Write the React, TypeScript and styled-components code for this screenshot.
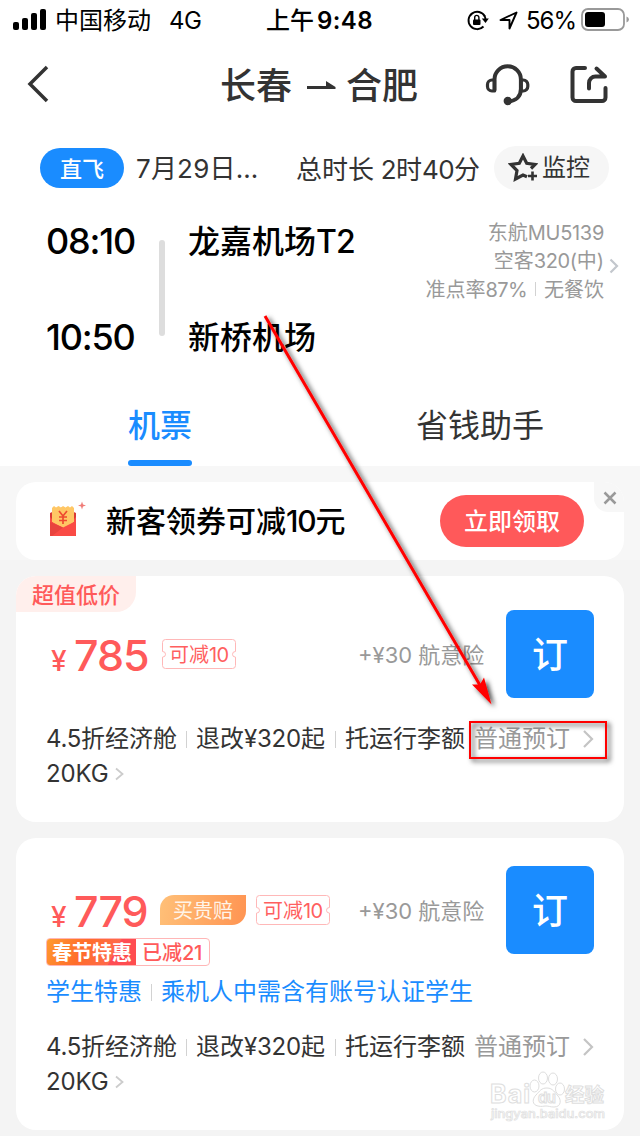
import React from 'react';
import styled, { createGlobalStyle } from 'styled-components';

const BLUE = '#1a8cff';
const RED = '#ff5a5a';
const INK = '#333';
const GREY = '#999';

const GlobalStyle = createGlobalStyle`
  * { box-sizing: border-box; }
  body {
    margin: 0;
    background: #f4f4f4;
    font-family: Inter, "Noto Sans CJK SC", sans-serif;
    overflow: hidden;
  }
`;

const Screen = styled.div`
  position: relative;
  width: 640px;
  height: 1136px;
  overflow: hidden;
  background: #f4f4f4;
`;

const Text = styled.span<{
  $size: number;
  $w?: number;
  $color?: string;
  $weight?: number;
  $track?: number;
  $drop?: number;
}>`
  display: block;
  flex: none;
  width: ${(p) => (p.$w ? `${p.$w}px` : 'auto')};
  margin-top: ${(p) => p.$drop ?? 0}px;
  margin-bottom: ${(p) => -(p.$drop ?? 0)}px;
  font-size: ${(p) => p.$size}px;
  line-height: 36px;
  font-weight: ${(p) => p.$weight ?? 400};
  color: ${(p) => p.$color ?? INK};
  letter-spacing: ${(p) => p.$track ?? 0}px;
  white-space: nowrap;
`;

const Num = styled.span<{ $track: number }>`
  letter-spacing: ${(p) => p.$track}px;
`;

const Header = styled.header`
  height: 466px;
  background: #fff;
`;

const StatusBar = styled.div`
  display: flex;
  align-items: center;
  height: 40px;
  padding-left: 13px;
`;

const SignalIcon = styled.svg`
  flex: none;
  width: 42px;
  height: 24px;
`;

const StatusIcon = styled.svg<{ $w: number; $gap: number }>`
  flex: none;
  width: ${(p) => p.$w}px;
  height: 24px;
  margin-right: ${(p) => p.$gap}px;
`;

const NavBar = styled.nav`
  display: flex;
  align-items: center;
  height: 88px;
  padding-left: 26px;
`;

const NavIcon = styled.svg<{ $w: number; $gap: number }>`
  flex: none;
  width: ${(p) => p.$w}px;
  height: 48px;
  margin-right: ${(p) => p.$gap}px;
`;

const Summary = styled.div`
  display: flex;
  align-items: center;
  height: 44px;
  margin-top: 18px;
  padding-left: 40px;
`;

const DirectPill = styled.div`
  display: flex;
  align-items: center;
  justify-content: center;
  width: 84px;
  height: 40px;
  margin-right: 12px;
  border-radius: 20px;
  background: ${BLUE};
`;

const MonitorPill = styled.div`
  display: flex;
  align-items: center;
  width: 115px;
  height: 44px;
  padding-left: 14px;
  border-radius: 22px;
  background: #f6f6f6;
  svg { flex: none; margin-right: 4px; }
`;

const Itinerary = styled.section`
  display: flex;
  height: 150px;
  margin-top: 28px;
  padding: 5px 0 0 46px;
`;

const Stops = styled.div<{ $w: number }>`
  display: flex;
  flex-direction: column;
  gap: 60px;
  width: ${(p) => p.$w}px;
`;

const Rail = styled.div`
  width: 6px;
  height: 96px;
  margin: 17px 23px 0 0;
  border-radius: 3px;
  background: #ddd;
`;

const FlightInfo = styled.div`
  display: flex;
  flex-direction: column;
  align-items: flex-end;
  width: 192px;
  margin-top: -5px;
  span { line-height: 28.5px; }
`;

const InfoLine = styled.div`
  display: flex;
  align-items: center;
`;

const Divider = styled.i<{ $h: number; $before: number; $after: number }>`
  flex: none;
  width: 1px;
  height: ${(p) => p.$h}px;
  margin: 0 ${(p) => p.$after}px 0 ${(p) => p.$before}px;
  background: #d2d2d2;
`;

const InfoChevron = styled.svg`
  width: 10px;
  height: 16px;
  margin: 35px 0 0 5px;
`;

const Tabs = styled.div`
  display: grid;
  grid-template-columns: 1fr 1fr;
  height: 98px;
`;

const Tab = styled.div<{ $active?: boolean }>`
  display: flex;
  flex-direction: column;
  align-items: center;
  justify-content: space-between;
  padding-top: 39px;
  &::after {
    content: '';
    width: 64px;
    height: 6px;
    border-radius: 3px;
    background: ${(p) => (p.$active ? BLUE : 'transparent')};
  }
`;

const BannerArea = styled.div`
  height: 94px;
  padding: 16px 16px 0;
  background: #f7f7f7;
`;

const Banner = styled.section`
  display: flex;
  align-items: flex-start;
  height: 78px;
  padding-left: 32px;
  border-radius: 20px;
  background: #fff;
  overflow: hidden;
`;

const Envelope = styled.svg`
  flex: none;
  width: 40px;
  height: 40px;
  margin: 18px 18px 0 0;
`;

const BannerTitle = styled.div`
  width: 334px;
  padding-top: 21px;
`;

const ClaimButton = styled.button`
  width: 144px;
  height: 52px;
  margin-top: 13px;
  padding: 0;
  border: 0;
  border-radius: 26px;
  background: #ff595a;
  display: flex;
  align-items: center;
  justify-content: center;
  font-family: inherit;
`;

const CloseButton = styled.div`
  display: flex;
  align-items: center;
  justify-content: center;
  width: 30px;
  height: 30px;
  margin-left: 10px;
  padding-left: 2px;
  padding-top: 2px;
  border-bottom-left-radius: 14px;
  background: #f7f7f7;
`;

const Card = styled.article<{ $h: number }>`
  height: ${(p) => p.$h}px;
  margin: 16px 16px 0;
  border-radius: 20px;
  background: #fff;
  overflow: hidden;
`;

const CornerTag = styled.div`
  display: flex;
  align-items: center;
  width: 120px;
  height: 36px;
  padding-left: 16px;
  border-bottom-right-radius: 20px;
  background: #ffefec;
`;

const PriceRow = styled.div<{ $top: number }>`
  display: flex;
  align-items: center;
  height: 88px;
  margin-top: ${(p) => p.$top}px;
  padding: 0 30px 0 35px;
`;

const Price = styled.div<{ $w: number }>`
  display: flex;
  align-items: baseline;
  flex: none;
  width: ${(p) => p.$w}px;
  padding-top: 7px;
`;

const Insurance = styled.div`
  margin-left: auto;
  width: 148px;
`;

const BookButton = styled.button`
  flex: none;
  display: flex;
  align-items: center;
  justify-content: center;
  width: 88px;
  height: 88px;
  padding: 0;
  border: 0;
  border-radius: 8px;
  background: ${BLUE};
  font-family: inherit;
`;

const TicketBox = styled.div`
  display: grid;
  width: 74px;
  height: 30px;
  > * { grid-area: 1 / 1; }
  > span { padding-left: 7px; line-height: 30px; }
`;

const Guarantee = styled.div`
  display: flex;
  width: 86px;
  height: 30px;
  margin-right: 10px;
  padding-left: 13px;
  border-radius: 14px 0 14px 0;
  background: linear-gradient(100deg, #ffc078, #ff9452);
  span { line-height: 30px; }
`;

const Promo = styled.div`
  display: flex;
  width: 164px;
  height: 28px;
  margin: -16px 0 0 30px;
  border: 1px solid #ffb6b6;
  border-radius: 4px;
  overflow: hidden;
  span { line-height: 28px; }
`;

const PromoName = styled.div`
  width: 89px;
  padding-left: 5px;
  background: linear-gradient(118deg, #ff9a2e 0%, #ff6d2b 40%, #ff6a4a 72%, #ff4d55 73%, #ff4d4d 100%);
`;

const PromoValue = styled.div`
  padding-left: 6px;
`;

const Student = styled.div`
  display: flex;
  align-items: center;
  margin-top: 8px;
  padding-left: 30px;
`;

const Details = styled.div<{ $top: number }>`
  display: flex;
  align-items: center;
  height: 36px;
  margin-top: ${(p) => p.$top}px;
  padding-left: 30px;
`;

const Baggage = styled.div`
  display: flex;
  align-items: center;
  height: 34px;
  padding-left: 30px;
`;

const Annotation = styled.svg`
  position: absolute;
  left: 0;
  top: 0;
  pointer-events: none;
`;

const Watermark = styled.svg`
  position: absolute;
  left: 486px;
  top: 1060px;
`;

function Ticket() {
  return (
    <TicketBox>
      <svg width="74" height="30" viewBox="0 0 74 30" fill="none" stroke="#ffb8b8" strokeWidth="1">
        <path d="M3.500.5h67a3 3 0 0 1 3 3v9q-3 0-3 2.800t3 2.800v8.400a3 3 0 0 1-3 3h-67a3 3 0 0 1-3-3v-8.400q3 0 3-2.800t-3-2.800v-9a3 3 0 0 1 3-3z" />
      </svg>
      <Text $size={20} $color="#ff5f5f" $drop={1}>可减<Num $track={-0.6}>10</Num></Text>
    </TicketBox>
  );
}

function FareHead({ price, top, guarantee }: { price: string; top: number; guarantee?: boolean }) {
  return (
    <PriceRow $top={top}>
      <Price $w={guarantee ? 109 : 111}>
        <Text $size={28} $w={23} $color={RED} $weight={500}>¥</Text>
        <Text $size={43} $color={RED} $weight={550} $track={-1}>{price}</Text>
      </Price>
      {guarantee && (
        <Guarantee>
          <Text $size={20} $color="#fff4e8" $drop={1}>买贵赔</Text>
        </Guarantee>
      )}
      <Ticket />
      <Insurance>
        <Text $size={22} $color={GREY} $drop={1}><Num $track={0}>+¥30 </Num>航意险</Text>
      </Insurance>
      <BookButton>
        <Text $size={36} $color="#fff" $weight={500} $drop={1}>订</Text>
      </BookButton>
    </PriceRow>
  );
}

function FareDetails({ top }: { top: number }) {
  return (
    <>
      <Details $top={top}>
        <Text $size={24} $w={131}><Num $track={-0.3}>4.5</Num>折经济舱</Text>
        <Divider $h={17} $before={9} $after={9} />
        <Text $size={24} $w={130}>退改<Num $track={-0.2}>¥320</Num>起</Text>
        <Divider $h={17} $before={9} $after={9} />
        <Text $size={24} $w={129}>托运行李额</Text>
        <Text $size={24} $w={108} $color={GREY}>普通预订</Text>
        <svg width="14" height="20" viewBox="0 0 14 20" fill="none" stroke="#c4c4c4" strokeWidth="2.200">
          <path d="M2 2l8 8-8 8" />
        </svg>
      </Details>
      <Baggage>
        <Text $size={24} $w={69} $track={-0.1}>20KG</Text>
        <svg width="10" height="14" viewBox="0 0 10 14" fill="none" stroke="#ccc" strokeWidth="1.800">
          <path d="M1 1.500l6.500 5.500L1 12.500" />
        </svg>
      </Baggage>
    </>
  );
}

export default function App() {
  return (
    <Screen>
      <GlobalStyle />
      <Header>
        <StatusBar>
          <SignalIcon viewBox="0 0 42 24">
            <rect x="0" y="14" width="6" height="8" rx="2" />
            <rect x="9" y="10" width="6" height="12" rx="2" />
            <rect x="18" y="5" width="6" height="17" rx="2" />
            <rect x="27" y="1" width="6" height="21" rx="2" />
          </SignalIcon>
          <Text $size={24} $w={114} $color="#000" $drop={1}>中国移动</Text>
          <Text $size={24} $w={97} $color="#000" $track={-0.6} $drop={1}>4G</Text>
          <Text $size={24} $w={51} $color="#000" $weight={500} $drop={1}>上午</Text>
          <Text $size={24} $w={150} $color="#000" $weight={600} $track={0.4} $drop={1}>9:48</Text>
          <StatusIcon $w={22} $gap={10} viewBox="0 0 22 24" fill="none" stroke="#000" strokeWidth="1.900">
            <path d="M17.800 8.200A8.700 8.700 0 1 0 16.500 18.500" />
            <path d="M17.300 7.500q1.200 2 1.200 4" />
            <path d="M14.800 10.500h7l-3.300 4.500z" fill="#000" stroke="none" />
            <rect x="6" y="11.500" width="7.500" height="5.500" rx="1" fill="#000" stroke="none" />
            <path d="M7.700 12V9.500a2.100 2.100 0 0 1 4.200 0V12" strokeWidth="1.400" />
          </StatusIcon>
          <StatusIcon $w={20} $gap={7} viewBox="0 0 20 24" fill="none" stroke="#000" strokeWidth="1.900" strokeLinejoin="round">
            <path d="M1.500 12L17.500 4.500 10.500 20.500V12z" />
          </StatusIcon>
          <Text $size={24} $w={55} $color="#000" $track={-1} $drop={1}>56%</Text>
          <StatusIcon $w={48} $gap={0} viewBox="0 0 48 24">
            <rect x="1" y="1" width="42" height="21" rx="6" fill="none" stroke="#999" strokeWidth="1.800" />
            <rect x="4" y="4" width="20" height="15" rx="3" />
            <path d="M45.500 8.500q2.500 1 2.500 3t-2.500 3z" fill="#999" />
          </StatusIcon>
        </StatusBar>

        <NavBar>
          <NavIcon $w={24} $gap={170} viewBox="0 0 24 48" fill="none" stroke={INK} strokeWidth="3.500">
            <path d="M21 7L4 24l17 17" />
          </NavIcon>
          <Text $size={36} $w={86} $weight={500} $drop={2}>长春</Text>
          <NavIcon $w={30} $gap={10} viewBox="0 0 30 48" fill={INK}>
            <path d="M1 26h19v-5l9.500 6v2H1z" />
          </NavIcon>
          <Text $size={36} $w={138} $weight={500} $drop={2}>合肥</Text>
          <NavIcon $w={46} $gap={39} viewBox="0 0 46 48" fill="none" stroke={INK} strokeWidth="4" strokeLinecap="round" strokeLinejoin="round">
            <path d="M10.500 30V19.500a13.200 13.200 0 0 1 26.400 0V29c0 7-4.500 12-12.900 12.500" />
            <path d="M10.500 20H8a4.500 4.500 0 0 0-4.500 4.500v2A4.500 4.500 0 0 0 8 31h2.500zM37 20h2.300a4.500 4.500 0 0 1 4.500 4.500v2a4.500 4.500 0 0 1-4.500 4.500H37z" strokeWidth="3.200" />
            <circle cx="23.800" cy="41" r="2.200" fill={INK} />
          </NavIcon>
          <NavIcon $w={40} $gap={0} viewBox="0 0 40 48" fill="none" stroke={INK} strokeWidth="4" strokeLinecap="round" strokeLinejoin="round">
            <path d="M16 8H7a3.500 3.500 0 0 0-3.500 3.500v26A3.500 3.500 0 0 0 7 41h26a3.500 3.500 0 0 0 3.500-3.500V28" />
            <path d="M20 28.500V23a6.500 6.500 0 0 1 6.500-6.500H36L27.500 8.500" />
          </NavIcon>
        </NavBar>

        <Summary>
          <DirectPill>
            <Text $size={22} $color="#fff" $weight={500} $drop={1}>直飞</Text>
          </DirectPill>
          <Text $size={26} $w={160} $track={0.2} $drop={1}>7月29日…</Text>
          <Text $size={26} $w={198} $drop={2}>总时长<Num $track={-0.6}> 2</Num>时<Num $track={-0.6}>40</Num>分</Text>
          <MonitorPill>
            <svg width="30" height="30" viewBox="0 0 30 30" fill="none" stroke={INK} strokeWidth="3.200">
              <path d="M19 23.800L15 22l-7.500 4 1.500-8.500L3 11.500l8.300-1.200L15 3l3.700 7.300L27 11.500l-4 4" />
              <path d="M24.500 18.500v9M20 23h9" strokeWidth="2.600" />
            </svg>
            <Text $size={24}>监控</Text>
          </MonitorPill>
        </Summary>

        <Itinerary>
          <Stops $w={113}>
            <Text $size={36} $color="#000" $weight={500} $track={-1.2}>08:10</Text>
            <Text $size={36} $color="#000" $weight={500} $track={-1.2}>10:50</Text>
          </Stops>
          <Rail />
          <Stops $w={224}>
            <Text $size={32} $color="#000" $weight={500} $drop={1}>龙嘉机场<Num $track={-0.8}>T2</Num></Text>
            <Text $size={32} $color="#000" $weight={500} $drop={1}>新桥机场</Text>
          </Stops>
          <FlightInfo>
            <Text $size={20} $color={GREY} $drop={1}>东航<Num $track={-0.3}>MU5139</Num></Text>
            <Text $size={20} $color={GREY}>空客<Num $track={-0.4}>320(</Num>中)</Text>
            <InfoLine>
              <Text $size={20} $color={GREY} $drop={1}>准点率<Num $track={-0.6}>87%</Num></Text>
              <Divider $h={14} $before={8} $after={8} />
              <Text $size={20} $color={GREY} $drop={1}>无餐饮</Text>
            </InfoLine>
          </FlightInfo>
          <InfoChevron viewBox="0 0 10 16" fill="none" stroke="#c3c7cd" strokeWidth="2.200">
            <path d="M1.500 1.500L8 8l-6.500 6.500" />
          </InfoChevron>
        </Itinerary>

        <Tabs>
          <Tab $active>
            <Text $size={32} $color={BLUE} $weight={500} $drop={1}>机票</Text>
          </Tab>
          <Tab>
            <Text $size={32} $drop={1}>省钱助手</Text>
          </Tab>
        </Tabs>
      </Header>

      <BannerArea>
        <Banner>
          <Envelope viewBox="0 0 40 40">
            <path d="M2 13l13-6 13 6v23H2z" fill="#d93a35" />
            <path d="M4 8l2-2 2 1.500L10.500 6 13 7.500 15 6l2.500 1.500L20 6l2 1.500L24 6l2 2v14l-11 8-11-8z" fill="#ffc765" />
            <path d="M2 17l2 2v3l11 5.500L26 22v-3l2-2v18a1 1 0 0 1-1 1H3a1 1 0 0 1-1-1z" fill="#fa4b45" />
            <path d="M2 35.500V22l13 5.500L4 36z" fill="#e8433e" />
            <path d="M11 11l4 5 4-5M15 16v8M11 17h8M11 20.500h8" fill="none" stroke="#ee4a30" strokeWidth="1.700" />
            <path d="M34 1.500l1 3 3 1-3 1-1 3-1-3-3-1 3-1z" fill="#f07c78" />
          </Envelope>
          <BannerTitle>
            <Text $size={30} $color="#000" $weight={500}>新客领券可减<Num $track={-1.2}>10</Num>元</Text>
          </BannerTitle>
          <ClaimButton>
            <Text $size={24} $color="#fff" $weight={500} $drop={1}>立即领取</Text>
          </ClaimButton>
          <CloseButton>
            <svg width="14" height="14" viewBox="0 0 14 14" stroke="#999" strokeWidth="2.500">
              <path d="M1.500 1.500l11 11M12.500 1.500l-11 11" />
            </svg>
          </CloseButton>
        </Banner>
      </BannerArea>

      <Card $h={246}>
        <CornerTag>
          <Text $size={22} $color={RED} $weight={500} $drop={1}>超值低价</Text>
        </CornerTag>
        <FareHead price="785" top={-2} />
        <FareDetails top={23} />
      </Card>

      <Card $h={292}>
        <FareHead price="779" top={28} guarantee />
        <Promo>
          <PromoName>
            <Text $size={20} $color="#fff" $weight={700}>春节特惠</Text>
          </PromoName>
          <PromoValue>
            <Text $size={20} $color={RED} $weight={500}>已减<Num $track={-0.4}>21</Num></Text>
          </PromoValue>
        </Promo>
        <Student>
          <Text $size={24} $w={96} $color={BLUE}>学生特惠</Text>
          <Divider $h={17} $before={9} $after={9} />
          <Text $size={24} $color={BLUE}>乘机人中需含有账号认证学生</Text>
        </Student>
        <FareDetails top={19} />
      </Card>

      <Watermark width="124" height="64" viewBox="0 0 124 64" fill="#fff" stroke="#dedede" strokeWidth="1">
        <text x="4" y="43" fontSize="25" fontWeight="700" fontFamily="Inter" textLength="40">Bai</text>
        <ellipse cx="48.500" cy="26" rx="4.500" ry="6" />
        <ellipse cx="57" cy="18" rx="4.500" ry="6" />
        <ellipse cx="67" cy="19" rx="4.500" ry="6" />
        <ellipse cx="74" cy="29" rx="4.500" ry="6" />
        <path d="M61 28c6 0 8 5 11 8s4 11-4 11c-4 0-5-1-8-1s-4 1-8 0c-6-1-6-7-2-11s5-7 11-7z" />
        <text x="52" y="43" fontSize="15" fontWeight="600" fontFamily="Inter" textLength="18">du</text>
        <text x="79" y="42" fontSize="19.500" fontWeight="700" fontFamily="Noto Sans CJK SC">经验</text>
        <text x="5" y="58" fontSize="12" fontWeight="500" fontFamily="Inter" textLength="114" lengthAdjust="spacingAndGlyphs" strokeWidth="0.700">jingyan.baidu.com</text>
      </Watermark>

      <Annotation width="640" height="1136" viewBox="0 0 640 1136" fill="none">
        <defs>
          <filter id="drop" x="-20%" y="-20%" width="150%" height="150%">
            <feDropShadow dx="3" dy="2.500" stdDeviation="2.500" floodColor="#000" floodOpacity="0.750" />
          </filter>
        </defs>
        <g filter="url(#drop)">
          <path d="M265 316L481 687" stroke="#f00" strokeWidth="3" />
          <path d="M491.500 704.500l-19.500-20 8 0 4-7z" fill="#f00" />
          <rect x="470" y="722" width="136" height="36" stroke="#f00" strokeWidth="2" />
        </g>
      </Annotation>
    </Screen>
  );
}
